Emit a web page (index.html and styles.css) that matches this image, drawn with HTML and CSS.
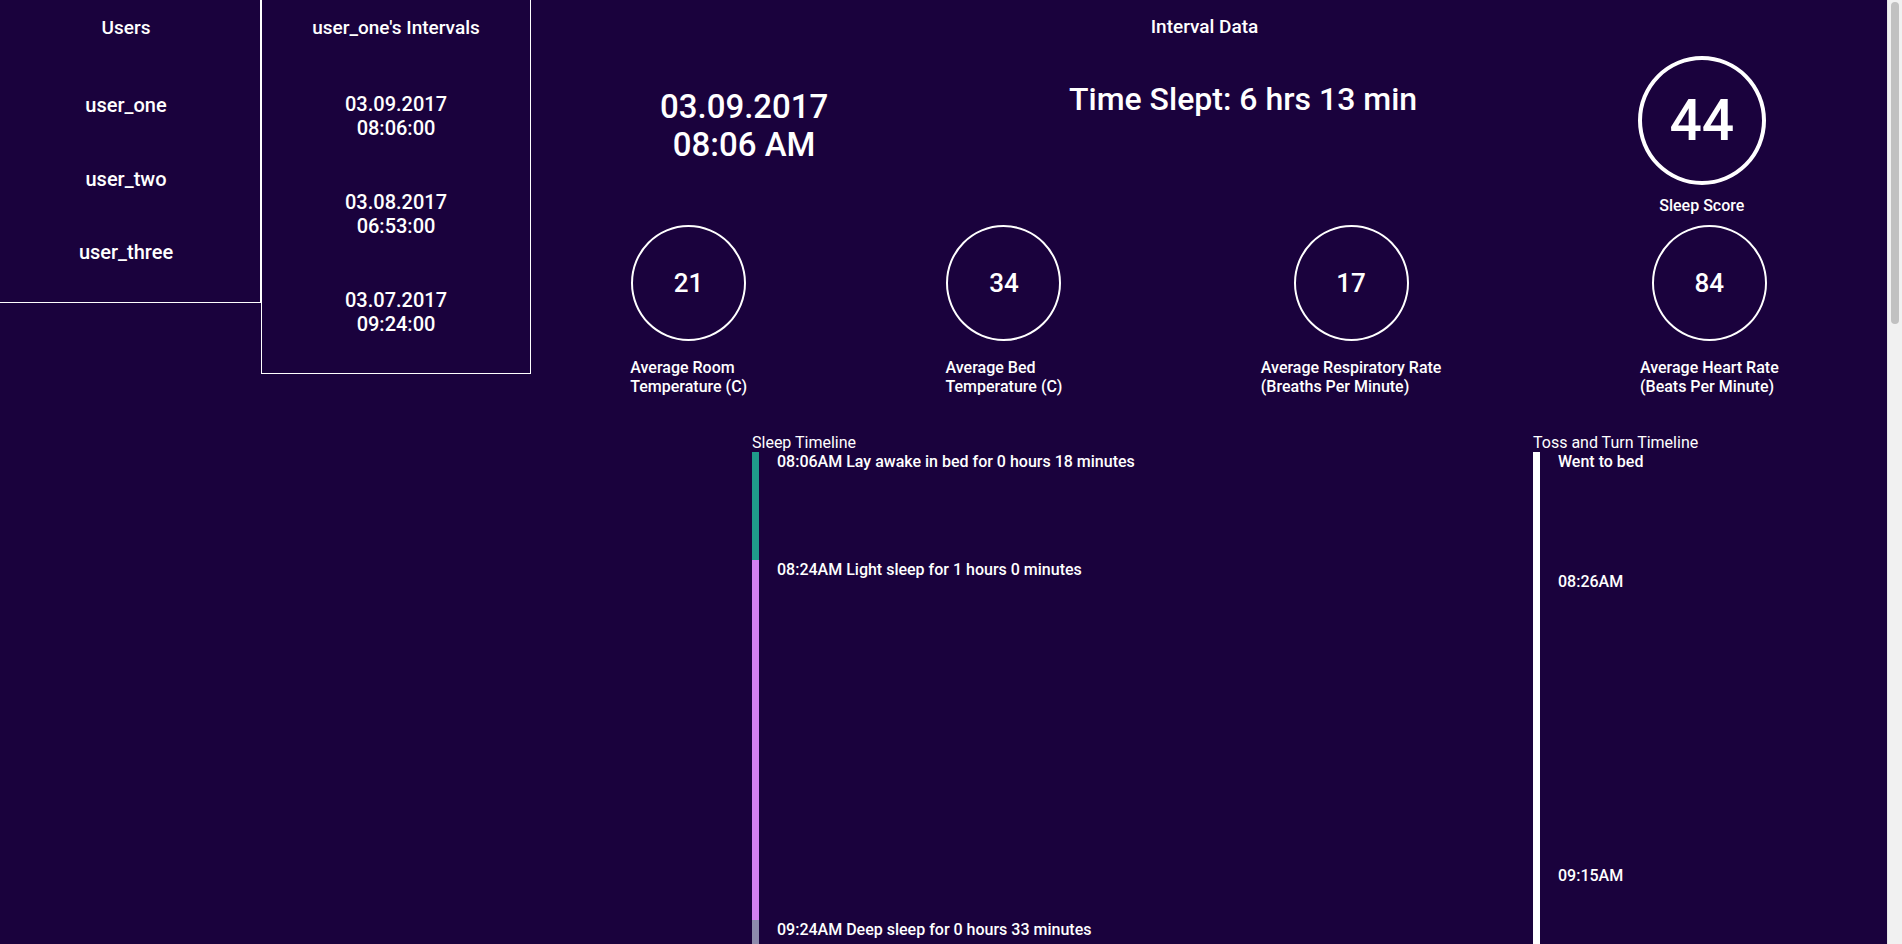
FILE: index.html
```html
<!DOCTYPE html>
<html lang="en">
<head>
<meta charset="utf-8">
<title>Sleep Data</title>
<link rel="stylesheet" href="styles.css">
</head>
<body>
<div class="frame">
<div class="page">
  <aside class="users">
    <div class="col-title">Users</div>
    <ul class="user-list">
      <li>user_one</li>
      <li>user_two</li>
      <li>user_three</li>
    </ul>
  </aside>
  <aside class="intervals">
    <div class="col-title">user_one's Intervals</div>
    <ul class="interval-list">
      <li>03.09.2017<br>08:06:00</li>
      <li>03.08.2017<br>06:53:00</li>
      <li>03.07.2017<br>09:24:00</li>
    </ul>
  </aside>
  <main class="main">
    <div class="main-title">Interval Data</div>
    <div class="top-row">
      <div class="date-block">03.09.2017<br>08:06 AM</div>
      <div class="slept">Time Slept: 6 hrs 13 min</div>
      <div class="score">
        <div class="score-circle">44</div>
        <div class="score-label">Sleep Score</div>
      </div>
    </div>
    <div class="stats-row">
      <div class="stat">
        <div class="stat-circle">21</div>
        <div class="stat-label">Average Room<br>Temperature (C)</div>
      </div>
      <div class="stat">
        <div class="stat-circle">34</div>
        <div class="stat-label">Average Bed<br>Temperature (C)</div>
      </div>
      <div class="stat">
        <div class="stat-circle">17</div>
        <div class="stat-label">Average Respiratory Rate<br>(Breaths Per Minute)</div>
      </div>
      <div class="stat">
        <div class="stat-circle">84</div>
        <div class="stat-label">Average Heart Rate<br>(Beats Per Minute)</div>
      </div>
    </div>
    <div class="timelines">
      <section class="timeline">
        <div class="tl-title">Sleep Timeline</div>
        <div class="seg" style="height:108px"><span class="bar awake"></span><span class="seg-text">08:06AM Lay awake in bed for 0 hours 18 minutes</span></div>
        <div class="seg" style="height:360px"><span class="bar light"></span><span class="seg-text">08:24AM Light sleep for 1 hours 0 minutes</span></div>
        <div class="seg" style="height:198px"><span class="bar deep"></span><span class="seg-text">09:24AM Deep sleep for 0 hours 33 minutes</span></div>
        <div class="seg" style="height:270px"><span class="bar light"></span><span class="seg-text">09:57AM Light sleep for 0 hours 45 minutes</span></div>
        <div class="seg" style="height:432px"><span class="bar deep"></span><span class="seg-text">10:42AM Deep sleep for 1 hours 12 minutes</span></div>
        <div class="seg" style="height:246px"><span class="bar light"></span><span class="seg-text">11:54AM Light sleep for 0 hours 41 minutes</span></div>
        <div class="seg" style="height:372px"><span class="bar deep"></span><span class="seg-text">12:35PM Deep sleep for 1 hours 2 minutes</span></div>
        <div class="seg" style="height:250px"><span class="bar awake"></span><span class="seg-text">01:37PM Lay awake in bed for 0 hours 41 minutes</span></div>
      </section>
      <section class="timeline">
        <div class="tl-title">Toss and Turn Timeline</div>
        <div class="toss">
          <div class="toss-item" style="height:120px">Went to bed</div>
          <div class="toss-item" style="height:294px">08:26AM</div>
          <div class="toss-item" style="height:330px">09:15AM</div>
          <div class="toss-item" style="height:408px">10:10AM</div>
          <div class="toss-item" style="height:390px">11:18AM</div>
          <div class="toss-item" style="height:294px">12:23PM</div>
          <div class="toss-item" style="height:400px">01:12PM</div>
        </div>
      </section>
    </div>
  </main>
</div>
<div class="scrollbar"><div class="thumb"></div></div>
</div>
</body>
</html>
```

FILE: styles.css
```css
* { box-sizing: border-box; }

html, body {
  margin: 0;
  padding: 0;
  background: #1a023d;
}

body {
  color: #ffffff;
  font-family: Roboto, "Liberation Sans", Arial, sans-serif;
}

ul {
  list-style: none;
  margin: 0;
  padding: 0;
}

.frame {
  display: flex;
  align-items: stretch;
}

.page {
  flex: 1;
  min-width: 0;
  display: flex;
  align-items: flex-start;
}

.scrollbar {
  width: 15px;
  flex: none;
  background: #f1f1f1;
  border-left: 1px solid #e6e6e6;
  padding: 2px 3px 0 3px;
}

.thumb {
  width: 8px;
  height: 322px;
  background: #c1c1c1;
  border-radius: 4px;
}

.col-title {
  font-size: 19px;
  font-weight: 500;
  line-height: 24px;
  text-align: center;
}

.users {
  width: 261px;
  flex: none;
  border-right: 1px solid #ffffff;
  border-bottom: 1px solid #ffffff;
  padding: 16px 8px 38px 0;
  text-align: center;
}

.user-list {
  margin-top: 53px;
  display: flex;
  flex-direction: column;
  gap: 49.5px;
  font-size: 20px;
  font-weight: 500;
  line-height: 24px;
}

.intervals {
  width: 270px;
  flex: none;
  border-left: 1px solid #ffffff;
  border-right: 1px solid #ffffff;
  border-bottom: 1px solid #ffffff;
  padding: 16px 0 37px;
  text-align: center;
}

.interval-list {
  margin-top: 52px;
  display: flex;
  flex-direction: column;
  gap: 50px;
  font-size: 20px;
  font-weight: 500;
  line-height: 24px;
}

.main {
  flex: 1;
  padding: 15px 9px 30px 0;
}

.main-title {
  text-align: center;
  font-size: 19px;
  font-weight: 500;
  line-height: 24px;
}

.top-row {
  display: flex;
  justify-content: space-around;
  align-items: flex-start;
}

.date-block {
  width: 203px;
  margin-top: 49px;
  text-align: center;
  font-size: 33px;
  font-weight: 500;
  line-height: 38px;
}

.slept {
  width: 345px;
  margin-top: 41px;
  text-align: center;
  font-size: 32px;
  font-weight: 500;
  line-height: 38px;
  white-space: nowrap;
}

.score {
  width: 129px;
  margin-top: 17px;
  display: flex;
  flex-direction: column;
  align-items: center;
}

.score-circle {
  width: 128px;
  height: 129px;
  border: 4px solid #ffffff;
  border-radius: 50%;
  display: flex;
  align-items: center;
  justify-content: center;
  font-size: 57px;
  font-weight: 500;
}

.score-label {
  margin-top: 11px;
  font-size: 16px;
  font-weight: 500;
  line-height: 19px;
  white-space: nowrap;
}

.stats-row {
  margin-top: 10px;
  display: flex;
  justify-content: space-around;
  align-items: flex-start;
}

.stat {
  display: flex;
  flex-direction: column;
  align-items: center;
}

.stat-circle {
  width: 115px;
  height: 116px;
  border: 2px solid #ffffff;
  border-radius: 50%;
  display: flex;
  align-items: center;
  justify-content: center;
  font-size: 26px;
  font-weight: 500;
}

.stat-label {
  margin-top: 17px;
  font-size: 16px;
  font-weight: 500;
  line-height: 19px;
  text-align: left;
  white-space: nowrap;
}

.timelines {
  margin-top: 38px;
  padding-left: 221px;
  display: grid;
  grid-template-columns: 781px 1fr;
}

.tl-title {
  font-size: 16px;
  line-height: 18px;
}

.seg {
  display: flex;
  align-items: flex-start;
}

.bar {
  width: 7px;
  height: 100%;
  flex: none;
}

.bar.awake { background: #1f9c8b; }
.bar.light { background: #d480f0; }
.bar.deep  { background: #8c8aab; }

.seg-text {
  padding-left: 18px;
  font-size: 16px;
  font-weight: 500;
  line-height: 20px;
}

.toss {
  border-left: 7px solid #ffffff;
}

.toss-item {
  padding-left: 18px;
  font-size: 16px;
  font-weight: 500;
  line-height: 20px;
}
```
